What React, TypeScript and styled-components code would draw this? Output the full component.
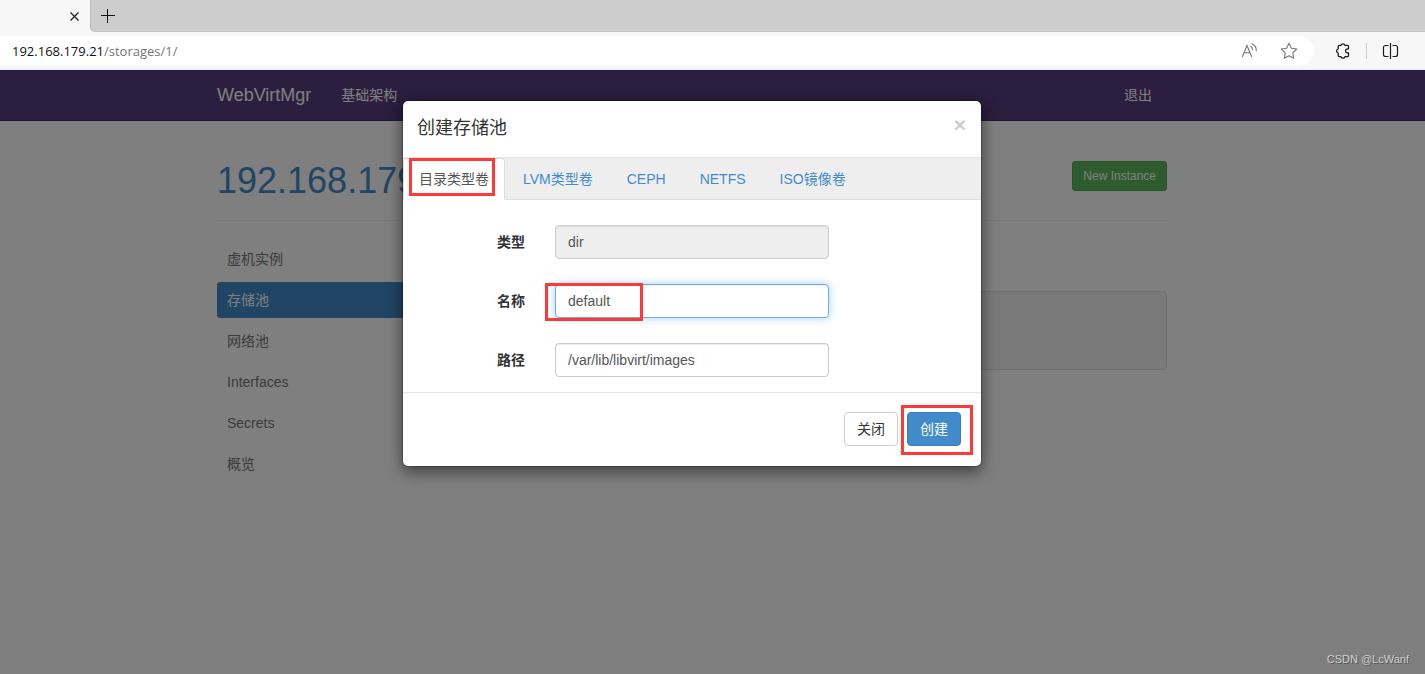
import React from "react";
import styled, { createGlobalStyle, css } from "styled-components";

const GlobalStyle = createGlobalStyle`
  * { box-sizing: border-box; }
  body {
    margin: 0;
    background: #fff;
    color: #333;
    font-family: "Liberation Sans", "Noto Sans CJK SC", sans-serif;
    font-size: 14px;
    line-height: 20px;
  }
  a { text-decoration: none; }
  button, input { font: inherit; margin: 0; }
  ul { margin: 0; padding: 0; list-style: none; }
`;

const Shell = styled.div`
  display: flex;
  flex-direction: column;
  min-height: 100vh;
`;

/* Browser chrome */

const TabStrip = styled.div`
  display: flex;
  height: 32px;
  background: #f7f7f7;
`;

const BrowserTab = styled.div`
  display: flex;
  align-items: center;
  justify-content: flex-end;
  width: 90px;
  padding-right: 9px;
  background: #f7f7f7;
`;

const StripRest = styled.div`
  flex: 1;
  display: flex;
  align-items: center;
  padding-left: 10px;
  background: #cdcdcd;
  border-left: 1px solid #bdbdbd;
  border-bottom: 1px solid #c4c4c4;
  border-bottom-left-radius: 5px;
`;

const IconButton = styled.button`
  display: flex;
  padding: 0;
  border: 0;
  background: none;
  color: inherit;
`;

const Toolbar = styled.div`
  display: flex;
  align-items: center;
  height: 38px;
  padding: 0 25px 0 0;
  background: #f7f7f7;
  border-bottom: 1px solid #e9ecf1;
  color: #1a1a1a;
`;

const AddressBar = styled.div`
  flex: 1;
  display: flex;
  align-items: center;
  gap: 21px;
  height: 30px;
  margin-right: 20px;
  padding: 0 16px 0 12px;
  background: #fff;
  border-radius: 0 15px 15px 0;
  color: #767676;
`;

const Url = styled.div`
  flex: 1;
  font-family: "Open Sans", sans-serif;
  font-size: 13px;
  color: #767676;
`;

const Host = styled.span`
  color: #111;
`;

const Separator = styled.span`
  width: 1px;
  height: 16px;
  margin: 0 15px 0 14px;
  background: #cfcfcf;
`;

/* Site */

const Viewport = styled.div`
  position: relative;
  flex: 1;
`;

const Navbar = styled.nav`
  height: 51px;
  padding-right: 41px;
  background: #563d7c;
  border-bottom: 1px solid #463265;
`;

const NavInner = styled.div`
  display: flex;
  align-items: center;
  max-width: 950px;
  height: 50px;
  margin: 0 auto;
`;

const Brand = styled.a`
  margin-right: 30px;
  font-size: 18px;
  color: #fff;
`;

const NavLink = styled.a<{ $end?: boolean }>`
  color: #fff;
  ${(p) => p.$end && css`margin-left: auto; padding-right: 15px;`}
`;

const Page = styled.div`
  padding: 40px 41px 0 0;
`;

const Container = styled.main`
  max-width: 950px;
  margin: 0 auto;
`;

const PageHeader = styled.header`
  display: flex;
  align-items: flex-start;
  justify-content: space-between;
  height: 60px;
  margin-bottom: 20px;
  border-bottom: 1px solid #eee;
`;

const PageTitle = styled.h1`
  margin: 0;
  font-size: 36px;
  font-weight: 400;
  line-height: 40px;
`;

const Link = styled.a`
  color: #428bca;
`;

const NewInstance = styled.button`
  height: 30px;
  padding: 0 10px;
  border: 1px solid #4cae4c;
  border-radius: 3px;
  background: #5cb85c;
  color: #fff;
  font-size: 12px;
`;

const Columns = styled.div`
  display: grid;
  grid-template-columns: 208px 1fr;
  gap: 30px;
  align-items: start;
`;

const SideNav = styled.ul`
  display: flex;
  flex-direction: column;
  gap: 5px;
`;

const SideLink = styled.a<{ $active?: boolean }>`
  display: block;
  padding: 8px 10px;
  border-radius: 3px;
  background: ${(p) => (p.$active ? "#428bca" : "transparent")};
  color: ${(p) => (p.$active ? "#fff" : "#777")};
`;

const Well = styled.section`
  height: 79px;
  margin-top: 50px;
  border: 1px solid #e3e3e3;
  border-radius: 4px;
  background: #f5f5f5;
  box-shadow: inset 0 1px 1px rgba(0, 0, 0, 0.05);
`;

/* Dialog */

const Backdrop = styled.div`
  position: absolute;
  inset: 0;
  display: flex;
  align-items: flex-start;
  justify-content: center;
  padding: 30px 41px 0 0;
  background: rgba(0, 0, 0, 0.5);
`;

const Dialog = styled.form`
  width: 100%;
  max-width: 580px;
  border: 1px solid rgba(0, 0, 0, 0.2);
  border-radius: 6px;
  background: #fff;
  background-clip: padding-box;
  box-shadow: 0 5px 15px rgba(0, 0, 0, 0.5);
`;

const DialogHeader = styled.div`
  display: flex;
  align-items: flex-start;
  justify-content: space-between;
  padding: 14px 15px 16px 14px;
  border-bottom: 1px solid #e5e5e5;
`;

const DialogTitle = styled.h4`
  margin: 0;
  font-size: 18px;
  font-weight: 400;
  line-height: 26px;
`;

const Close = styled.button`
  padding: 0;
  border: 0;
  background: none;
  color: #ccc;
  font-size: 21px;
  font-weight: 700;
  line-height: 20px;
`;

const Tabs = styled.div`
  display: flex;
  gap: 2px;
  height: 42px;
  background: #eee;
  border-bottom: 1px solid #ddd;
`;

const Tab = styled.a<{ $active?: boolean }>`
  position: relative;
  height: 42px;
  padding: 10px 15px;
  border: 1px solid transparent;
  border-radius: 4px 4px 0 0;
  color: #428bca;
  white-space: nowrap;
  ${(p) =>
    p.$active &&
    css`
      border-color: #ddd #ddd #fff;
      background: #fff;
      color: #555;
    `}
`;

const Fields = styled.div`
  display: flex;
  flex-direction: column;
  gap: 25px;
  padding: 25px 0 15px;
`;

const Field = styled.div`
  display: grid;
  grid-template-columns: 122px 274px;
  column-gap: 30px;
  align-items: center;
`;

const Label = styled.label`
  font-weight: 700;
  text-align: right;
`;

const Control = styled.div`
  position: relative;
`;

const TextInput = styled.input<{ $focused?: boolean }>`
  display: block;
  width: 100%;
  height: 34px;
  padding: 6px 12px;
  border: 1px solid ${(p) => (p.$focused ? "#66afe9" : "#ccc")};
  border-radius: 4px;
  outline: 0;
  background: #fff;
  color: #555;
  box-shadow: inset 0 1px 1px rgba(0, 0, 0, 0.075)
    ${(p) => p.$focused && ", 0 0 8px rgba(102, 175, 233, 0.6)"};
  &:disabled {
    background: #eee;
  }
`;

const DialogFooter = styled.div`
  display: flex;
  justify-content: flex-end;
  gap: 9px;
  padding: 19px 20px 20px;
  border-top: 1px solid #e5e5e5;
`;

const Button = styled.button<{ $primary?: boolean }>`
  position: relative;
  height: 34px;
  padding: 0 12px;
  border: 1px solid ${(p) => (p.$primary ? "#357ebd" : "#ccc")};
  border-radius: 4px;
  background: ${(p) => (p.$primary ? "#428bca" : "#fff")};
  color: ${(p) => (p.$primary ? "#fff" : "#333")};
`;

const Highlight = styled.span<{ $inset: string }>`
  position: absolute;
  inset: ${(p) => p.$inset};
  border: 3px solid #ff3838;
  pointer-events: none;
`;

const Watermark = styled.div`
  position: absolute;
  right: 16px;
  bottom: 5px;
  color: #d0d0d0;
  font-size: 11px;
  text-shadow: 1px 1px 0 #555;
`;

const sideItems = ["虚机实例", "存储池", "网络池", "Interfaces", "Secrets", "概览"];
const tabItems = ["目录类型卷", "LVM类型卷", "CEPH", "NETFS", "ISO镜像卷"];

export default function App() {
  return (
    <Shell>
      <GlobalStyle />
      <TabStrip>
        <BrowserTab>
          <IconButton aria-label="Close tab">
            <svg width="14" height="14" viewBox="0 0 14 14" fill="none" stroke="#222" strokeWidth="1.3">
              <path d="M3.500 3.500l8 8M11.500 3.500l-8 8" />
            </svg>
          </IconButton>
        </BrowserTab>
        <StripRest>
          <IconButton aria-label="New tab">
            <svg width="14" height="14" viewBox="0 0 14 14" fill="none" stroke="#111" strokeWidth="1">
              <path d="M0 6.500h14M6.500 0v14" />
            </svg>
          </IconButton>
        </StripRest>
      </TabStrip>
      <Toolbar>
        <AddressBar>
          <Url>
            <Host>192.168.179.21</Host>/storages/1/
          </Url>
          <IconButton aria-label="Read aloud">
            <svg width="18" height="18" viewBox="0 0 18 18" fill="none" stroke="currentColor" strokeWidth="1.100" strokeLinecap="round">
              <path d="M1.500 14.500L6 3.500l4.500 11M3.200 10.800h5.700" />
              <path d="M9.800 4.200q1.900 1.300 1.600 3.700M11 1.700q4.500 2.300 4.300 7" />
            </svg>
          </IconButton>
          <IconButton aria-label="Favorite">
            <svg width="18" height="18" viewBox="0 0 18 18" fill="none" stroke="currentColor" strokeWidth="1.100" strokeLinejoin="round">
              <path d="M9 1.300l2.400 4.900 5.300.8-3.900 3.800.9 5.400L9 13.700l-4.700 2.500.9-5.400L1.300 7l5.300-.8z" />
            </svg>
          </IconButton>
        </AddressBar>
        <IconButton aria-label="Extensions">
          <svg width="18" height="18" viewBox="0 0 18 18" fill="none" stroke="currentColor" strokeWidth="1.300" strokeLinejoin="round">
            <path d="M5.300 3.300H7a2.100 2.100 0 0 1 4 0h2.400a1.100 1.100 0 0 1 1.100 1.100v2.400h-.8a2 2 0 0 0 0 4.200h.8v2.600a1.100 1.100 0 0 1-1.100 1.100H11a2.100 2.100 0 0 1-4 0H5.300a1.100 1.100 0 0 1-1.100-1.100V11a2.200 2.200 0 0 1 0-4.200V4.400a1.100 1.100 0 0 1 1.100-1.100z" />
          </svg>
        </IconButton>
        <Separator />
        <IconButton aria-label="Split screen">
          <svg width="18" height="18" viewBox="0 0 18 18" fill="none" stroke="currentColor" strokeWidth="1.200">
            <path d="M6.500 3.500h-3a2 2 0 0 0-2 2v7a2 2 0 0 0 2 2h3M10.500 3.500h3a2 2 0 0 1 2 2v7a2 2 0 0 1-2 2h-3M8.500 1v16" />
          </svg>
        </IconButton>
      </Toolbar>
      <Viewport>
        <Navbar>
          <NavInner>
            <Brand href="#">WebVirtMgr</Brand>
            <NavLink href="#">基础架构</NavLink>
            <NavLink href="#" $end>退出</NavLink>
          </NavInner>
        </Navbar>
        <Page>
          <Container>
            <PageHeader>
              <PageTitle>
                <Link href="#">192.168.179.21</Link>
              </PageTitle>
              <NewInstance type="button">New Instance</NewInstance>
            </PageHeader>
            <Columns>
              <SideNav>
                {sideItems.map((item) => (
                  <li key={item}>
                    <SideLink href="#" $active={item === "存储池"}>{item}</SideLink>
                  </li>
                ))}
              </SideNav>
              <Well />
            </Columns>
          </Container>
        </Page>
        <Backdrop>
          <Dialog role="dialog" aria-labelledby="dialog-title">
            <DialogHeader>
              <DialogTitle id="dialog-title">创建存储池</DialogTitle>
              <Close type="button" aria-label="Close">×</Close>
            </DialogHeader>
            <Tabs>
              {tabItems.map((item, i) => (
                <Tab key={item} href="#" $active={i === 0}>
                  {item}
                  {i === 0 && <Highlight $inset="-1px 9px 3px 5px" />}
                </Tab>
              ))}
            </Tabs>
            <Fields>
              <Field>
                <Label htmlFor="pool-type">类型</Label>
                <Control>
                  <TextInput id="pool-type" defaultValue="dir" disabled />
                </Control>
              </Field>
              <Field>
                <Label htmlFor="pool-name">名称</Label>
                <Control>
                  <TextInput id="pool-name" defaultValue="default" $focused />
                  <Highlight $inset="-1px 186px -3px -10px" />
                </Control>
              </Field>
              <Field>
                <Label htmlFor="pool-path">路径</Label>
                <Control>
                  <TextInput id="pool-path" defaultValue="/var/lib/libvirt/images" />
                </Control>
              </Field>
            </Fields>
            <DialogFooter>
              <Button type="button">关闭</Button>
              <Button type="button" $primary>
                创建
                <Highlight $inset="-8px -13px -10px -7px" />
              </Button>
            </DialogFooter>
          </Dialog>
        </Backdrop>
        <Watermark>CSDN @LcWanf</Watermark>
      </Viewport>
    </Shell>
  );
}
